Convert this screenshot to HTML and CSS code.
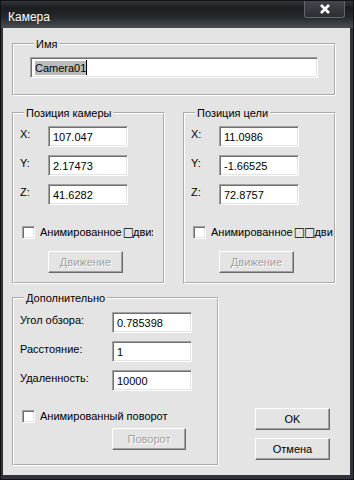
FILE: index.html
```html
<!DOCTYPE html>
<html lang="ru">
<head>
    <meta charset="UTF-8">
    <title>Камера</title>
    <link rel="stylesheet" href="styles.css">
</head>
<body>
    <div class="window">
        <div class="titlebar">
            <span class="title">Камера</span>
            <div class="close">
                <svg width="12" height="10" viewBox="0 0 12 10">
                    <path d="M2 1 L10 9 M10 1 L2 9" stroke="#fff" stroke-width="2.6" fill="none"/>
                </svg>
            </div>
        </div>
        <div class="client">
            <fieldset class="group group-name">
                <legend>Имя</legend>
                <div class="field name-field"><span class="sel">Camera01</span><span class="caret"></span></div>
            </fieldset>

            <div class="row">
                <fieldset class="group group-pos">
                    <legend>Позиция камеры</legend>
                    <div class="coords">
                        <label>X:</label><input class="field" value="107.047" readonly>
                        <label>Y:</label><input class="field" value="2.17473" readonly>
                        <label>Z:</label><input class="field" value="41.6282" readonly>
                    </div>
                    <label class="check">
                        <span class="box"></span>
                        <span class="check-text clip-left">Анимированное<span class="tofu">□</span>движение</span>
                    </label>
                    <button class="btn btn-move" disabled>Движение</button>
                </fieldset>

                <fieldset class="group group-pos">
                    <legend>Позиция цели</legend>
                    <div class="coords">
                        <label>X:</label><input class="field" value="11.0986" readonly>
                        <label>Y:</label><input class="field" value="-1.66525" readonly>
                        <label>Z:</label><input class="field" value="72.8757" readonly>
                    </div>
                    <label class="check">
                        <span class="box"></span>
                        <span class="check-text clip-right">Анимированное<span class="tofu">□□</span>движение</span>
                    </label>
                    <button class="btn btn-move" disabled>Движение</button>
                </fieldset>
            </div>

            <div class="row row-bottom">
                <fieldset class="group group-extra">
                    <legend>Дополнительно</legend>
                    <div class="coords coords-wide">
                        <label>Угол обзора:</label><input class="field" value="0.785398" readonly>
                        <label>Расстояние:</label><input class="field" value="1" readonly>
                        <label>Удаленность:</label><input class="field" value="10000" readonly>
                    </div>
                    <label class="check check-extra">
                        <span class="box"></span>
                        <span class="check-text">Анимированный поворот</span>
                    </label>
                    <button class="btn btn-turn" disabled>Поворот</button>
                </fieldset>

                <div class="actions">
                    <button class="btn btn-action">OK</button>
                    <button class="btn btn-action">Отмена</button>
                </div>
            </div>
        </div>
    </div>
</body>
</html>
```

FILE: styles.css
```css
body {
    margin: 0;
    font-family: "Liberation Sans", Arial, sans-serif;
    font-size: 11px;
    color: #000;
}
.window {
    width: 354px;
    height: 480px;
    box-sizing: border-box;
    border: 1px solid #101214;
    background: #30343a;
    display: flex;
    flex-direction: column;
}
.titlebar {
    height: 27px;
    flex: none;
    display: flex;
    align-items: flex-start;
    background: linear-gradient(to bottom, #34373b 0, #1c1d1f 25%, #26282b 60%, #4a4e53 100%);
}
.title {
    color: #fff;
    font-size: 12px;
    line-height: 14px;
    padding: 9px 0 0 7px;
}
.close {
    margin-left: auto;
    margin-right: 8px;
    width: 41px;
    height: 17px;
    box-sizing: border-box;
    border: 1px solid #62676e;
    border-top: none;
    border-radius: 0 0 3px 3px;
    background: linear-gradient(to bottom, #43474d, #2b2e32);
    display: flex;
    align-items: center;
    justify-content: center;
}
.client {
    flex: 1;
    margin: 0 3px 4px 2px;
    background: #e4e4e4;
    padding: 9px 0 0 9px;
}
.group {
    margin: 0;
    padding: 0;
    border: 2px groove #ffffff;
    min-width: 0;
    box-sizing: border-box;
}
.group legend {
    padding: 0 2px;
    margin-left: 4px;
    line-height: 14px;
}
.group-name {
    width: 324px;
    padding: 6px 0 16px 16px;
}
.row {
    display: flex;
    gap: 18px;
    margin-top: 10px;
}
.group-pos {
    width: 153px;
    padding: 6px 0 9px 6px;
}
.coords {
    display: grid;
    grid-template-columns: 28px 80px;
    row-gap: 8px;
}
.coords label {
    line-height: 14px;
    padding-top: 1px;
}
.coords-wide {
    grid-template-columns: 92px 80px;
}
.field {
    box-sizing: border-box;
    height: 21px;
    margin: 0;
    padding: 0 4px;
    border: 1px solid;
    border-color: #a0a0a0 #ffffff #ffffff #a0a0a0;
    box-shadow: inset 1px 1px 0 #707070, inset -1px -1px 0 #e4e4e4;
    background: #fff;
    font-family: inherit;
    font-size: 11px;
    color: #000;
    outline: none;
}
.name-field {
    width: 288px;
    display: flex;
    align-items: center;
}
.sel {
    background: #bcbcbc;
    line-height: 14px;
}
.caret {
    width: 1px;
    height: 15px;
    background: #000;
}
.check {
    display: flex;
    align-items: center;
    gap: 5px;
    margin: 21px 0 0 2px;
    height: 13px;
}
.box {
    flex: none;
    width: 13px;
    height: 13px;
    box-sizing: border-box;
    border: 1px solid;
    border-color: #a0a0a0 #ffffff #ffffff #a0a0a0;
    box-shadow: inset 1px 1px 0 #707070, inset -1px -1px 0 #e4e4e4;
    background: #fff;
}
.check-text {
    white-space: nowrap;
    overflow: hidden;
    line-height: 13px;
}
.tofu {
    font-family: "DejaVu Sans", sans-serif;
    font-size: 12px;
    letter-spacing: -1px;
    margin-left: 1px;
}
.clip-left {
    width: 113px;
}
.clip-right {
    width: 122px;
}
.btn {
    box-sizing: border-box;
    height: 22px;
    padding: 0;
    border: 1px solid;
    border-color: #ffffff #696969 #696969 #ffffff;
    box-shadow: inset -1px -1px 0 #a0a0a0;
    background: #e4e4e4;
    font-family: inherit;
    font-size: 11px;
    color: #000;
}
.btn:disabled {
    color: #a0a0a0;
    text-shadow: 1px 1px 0 #fff;
}
.btn-move {
    display: block;
    width: 75px;
    margin: 12px 0 0 28px;
}
.row-bottom {
    margin-top: 7px;
    gap: 36px;
    align-items: flex-end;
}
.group-extra {
    width: 207px;
    padding: 7px 0 14px 6px;
}
.check-extra {
    margin-top: 19px;
}
.btn-turn {
    display: block;
    width: 74px;
    margin: 5px 0 0 92px;
}
.actions {
    display: flex;
    flex-direction: column;
    gap: 8px;
    margin-bottom: 6px;
}
.btn-action {
    width: 75px;
}
```
